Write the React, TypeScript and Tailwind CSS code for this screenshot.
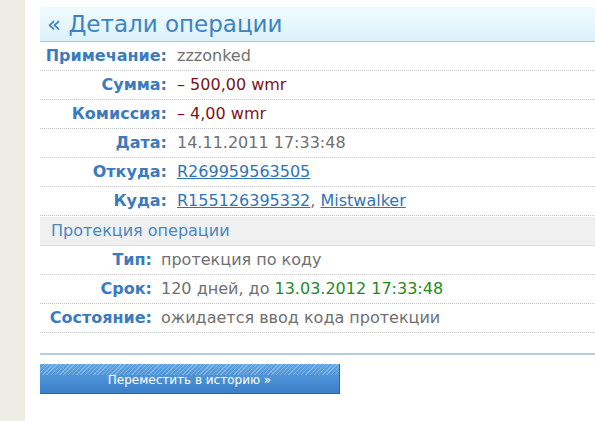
import React from 'react';

type Row = { label: string; value: React.ReactNode };

const mainRows: Row[] = [
  { label: 'Примечание:', value: <span className="text-[#707070]">zzzonked</span> },
  { label: 'Сумма:', value: <span className="text-[#7d1414]">– 500,00 wmr</span> },
  { label: 'Комиссия:', value: <span className="text-[#7d1414]">– 4,00 wmr</span> },
  { label: 'Дата:', value: <span className="text-[#707070]">14.11.2011 17:33:48</span> },
  {
    label: 'Откуда:',
    value: <a className="text-[#2f74b5] underline">R269959563505</a>,
  },
  {
    label: 'Куда:',
    value: (
      <span className="text-[#707070]">
        <a className="text-[#2f74b5] underline">R155126395332</a>,{' '}
        <a className="text-[#2f74b5] underline">Mistwalker</a>
      </span>
    ),
  },
];

const protRows: Row[] = [
  { label: 'Тип:', value: <span className="text-[#707070]">протекция по коду</span> },
  {
    label: 'Срок:',
    value: (
      <span className="text-[#707070]">
        120 дней, до <span className="text-[#1f8a1f]">13.03.2012 17:33:48</span>
      </span>
    ),
  },
  { label: 'Состояние:', value: <span className="text-[#707070]">ожидается ввод кода протекции</span> },
];

const DetailRow: React.FC<{ row: Row; labelW: string; gap: string }> = ({ row, labelW, gap }) => (
  <div className="flex h-[29px] items-center border-b border-dotted border-[#c8c8c8]">
    <div className={`${labelW} shrink-0 text-right font-bold text-[#3b7bbd]`}>{row.label}</div>
    <div className={gap}>{row.value}</div>
  </div>
);

export default function App() {
  return (
    <div className="flex h-[421px] w-[595px] overflow-hidden bg-white font-['DejaVu_Sans',sans-serif] text-[16px] leading-none">
      <div className="w-[25px] shrink-0 bg-[#ededE6]" />
      <div className="flex-1 pl-[15px] pt-[7px]">
        <div className="flex h-[35px] items-center border-b border-[#a9c9df] bg-gradient-to-b from-[#f1fbff] to-[#dcf1fb] pl-[7px]">
          <h1 className="text-[23px] text-[#3d83c3]">« Детали операции</h1>
        </div>

        {mainRows.map((r) => (
          <DetailRow key={r.label} row={r} labelW="w-[127px]" gap="ml-[10px]" />
        ))}

        <div className="mt-[1px] flex h-[29px] items-center border-b border-[#dcdcdc] bg-[#f0f0f0] pl-[11px] text-[#4a87c2]">
          Протекция операции
        </div>

        {protRows.map((r) => (
          <DetailRow key={r.label} row={r} labelW="w-[112px]" gap="ml-[9px]" />
        ))}

        <div className="mt-[20px] h-[2px] bg-[#b3cde2]" />

        <button className="relative mt-[9px] flex h-[30px] w-[300px] items-center justify-center overflow-hidden border-b border-r border-[#2b65a6] bg-gradient-to-b from-[#5ea3e2] to-[#3a7fc9] pt-[2px] text-[12px] text-white">
          <span className="absolute inset-x-0 top-0 h-[11px] bg-[repeating-linear-gradient(135deg,rgba(255,255,255,0.25)_0px,rgba(255,255,255,0.25)_1px,transparent_1px,transparent_3px)]" />
          <span className="relative">Переместить в историю »</span>
        </button>
      </div>
    </div>
  );
}
